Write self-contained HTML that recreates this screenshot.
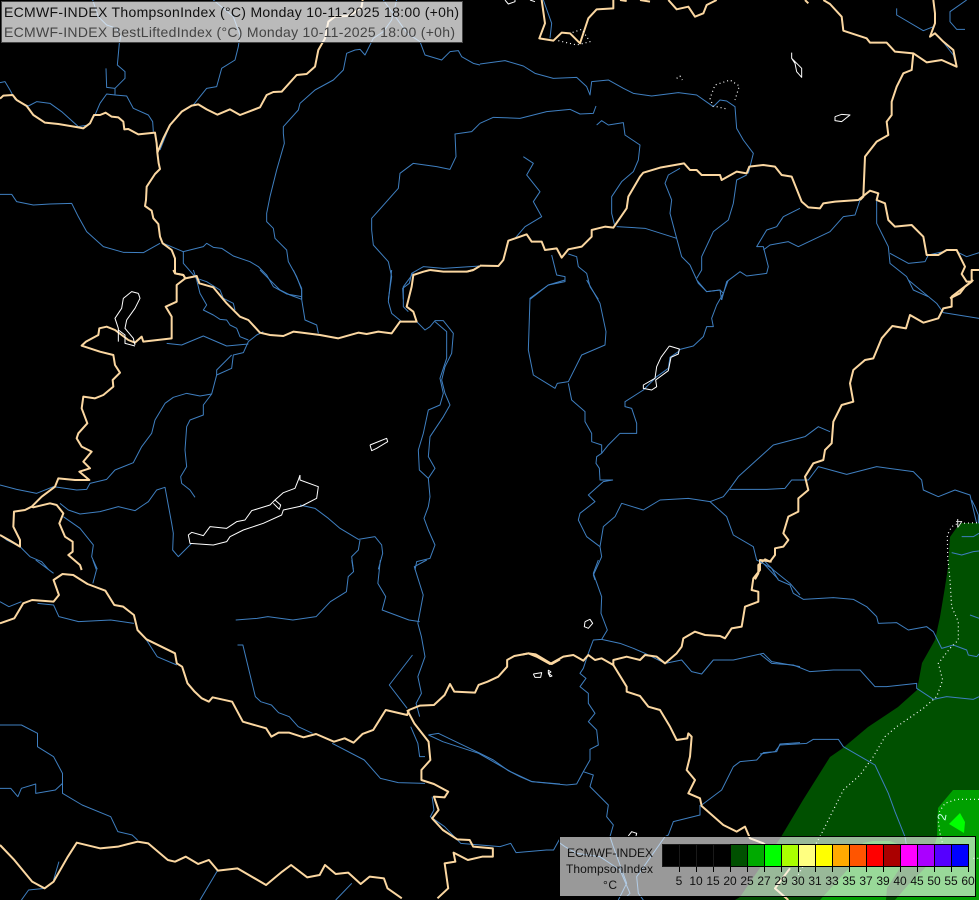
<!DOCTYPE html>
<html><head><meta charset="utf-8"><title>ECMWF-INDEX ThompsonIndex</title>
<style>
html,body{margin:0;padding:0;background:#000;width:979px;height:900px;overflow:hidden}
svg{display:block;position:absolute;left:0;top:0}
polyline{fill:none;vector-effect:non-scaling-stroke;stroke-linejoin:round}
.b polyline{stroke:#3f7fc0;stroke-width:1}
.t polyline{stroke:#fbd7a1;stroke-width:2}
.w polyline{stroke:#fff;stroke-width:1}
.d polyline{stroke:#fff;stroke-width:1.2;stroke-dasharray:1 3}
text{font-family:"Liberation Sans",sans-serif}
</style></head>
<body>
<svg width="979" height="900" viewBox="0 0 979 900" xmlns="http://www.w3.org/2000/svg">
<rect width="979" height="900" fill="#000"/>
<!-- fields -->
<polygon fill="#005000" points="979,523 960,523 950,537 948,567 945,587 940,617 935,640 922,663 917,690 898,707 868,727 843,748 830,757 803,800 781,837 740,897 735,900 979,900"/>
<polygon fill="#00a000" points="979,790 953,790 938,808 937,837 933,850 925,868 908,885 895,900 979,900"/>
<polygon fill="#00a000" points="863,843 873,841 890,841 900,845 900,868 887,888 886,900 820,900 840,878 850,867"/>
<polygon fill="#00ff00" points="960,813 965,822 964,833 949,824"/>

<!-- Z1 region -->
<g class="b" transform="translate(0 0) scale(.33333)">
<polyline points="0,248 15,245 30,270 45,298 60,307 85,318 110,305 150,310 185,335 235,380"/>
<polyline points="235,380 265,375 285,345 300,310 320,282 345,285 380,288 400,325 445,345 458,365 460,395"/>
<polyline points="480,450 500,400 510,375"/>
<polyline points="345,285 345,265 320,262 318,205"/>
<polyline points="345,265 375,235 375,215 352,195 358,130 362,110 350,85 320,75 295,50 278,0"/>
<polyline points="580,315 620,265 650,260 665,205 705,180 715,140 720,105 700,50 640,0"/>
<polyline points="905,898 905,870 890,830 865,785 860,750 825,715 820,685 800,665 800,640 810,590 830,510 853,430 850,400 850,380 895,330 900,310 945,270 1000,240 1030,210 1040,160 1065,150 1080,148 1095,165 1120,115 1150,95 1175,60 1190,0"/>
<polyline points="1150,0 1222,100 1260,125 1275,165 1325,180 1350,155 1375,152 1385,170 1420,190 1440,195"/>
<polyline points="0,583 35,583 50,605 100,615 150,612 215,610 235,650 260,695 310,740 370,757 430,758 480,730"/>
<polyline points="490,730 550,755 610,740 620,730 640,742 665,745 700,768 750,785 775,800 800,825 820,860 860,882 905,890"/>
<polyline points="550,755 550,790 585,830 600,845"/>
<polyline points="1440,370 1415,395 1365,402 1368,470 1350,508 1310,500 1240,490 1200,520 1195,565 1115,655 1115,690 1120,735 1165,785 1175,830 1165,898"/>
<polyline points="1210,898 1208,865 1228,850 1235,820 1270,800 1330,805 1440,798"/>
</g>
<g class="t" transform="translate(0 0) scale(.33333)">
<polyline points="0,296 10,287 38,285 50,300 80,318 100,345 135,368 175,372 235,382 250,385 270,370 282,345 300,345 317,338 335,350 355,352 370,365 373,388 385,387 415,403 465,398 470,430 472,458 476,490 480,507 465,522 440,560 438,600 435,618 455,632 460,655 475,672 480,710 488,730 515,750 525,775 525,820 550,825 556,835"/>
<polyline points="472,458 490,415 510,375 545,335 575,317 595,313 620,328 652,344 690,328 720,345 780,322 800,285 820,276 845,275 890,225 920,222 945,200 955,150 975,115 985,65 1005,50 1040,48 1060,40 1085,20 1088,0"/>
<polyline points="1400,815 1420,810 1440,798"/>
</g>

<!-- Z4 region -->
<g class="b" transform="translate(0 270) scale(.33333)">
<polyline points="0,645 50,658 110,670 160,650 230,660 260,658 270,640 320,628 345,600 400,578 425,530 455,490 465,450 495,400 520,382 560,370 600,378 635,372 650,315 695,295 700,255 730,248 745,215 770,195 790,185"/>
<polyline points="635,372 610,405 610,435 570,450 560,470 555,540 560,590 542,620 545,640 570,660 585,682"/>
<polyline points="650,315 650,300 695,255"/>
<polyline points="500,220 545,225 610,198 680,228 745,222"/>
<polyline points="745,210 720,200 710,175 690,165 680,150 660,148 640,135 610,120 620,105 600,70 590,30 580,0"/>
<polyline points="590,25 620,35 660,60 670,85 700,100 705,120"/>
<polyline points="780,0 815,35 840,60 870,75 905,88 915,150 950,165 955,190"/>
<polyline points="880,0 905,55 905,88"/>
<polyline points="1175,0 1165,95 1175,130 1205,155"/>
<polyline points="1240,10 1210,50 1210,110 1225,125"/>
<polyline points="1250,155 1275,180 1290,170 1305,152 1330,152 1360,190 1355,250 1335,290 1325,330 1335,370 1350,405 1330,440 1290,500 1285,560 1305,595 1285,625 1290,680 1285,710 1272,745 1285,780 1305,825 1290,865 1250,875 1245,900"/>
<polyline points="1305,155 1340,185 1340,265 1320,325 1330,370 1320,405 1285,420 1270,490 1255,540 1258,600 1285,625"/>
<polyline points="0,795 20,810 60,830 90,860 125,875 145,898"/>
<polyline points="190,740 240,775 280,825 275,860 292,898"/>
<polyline points="180,700 205,720 240,732 300,725 355,710 405,722 430,705 445,695 470,660 495,652 515,760 520,790 518,840 535,860 575,820"/>
<polyline points="900,705 945,715 985,745 1020,775 1075,808 1125,800 1145,825 1148,850 1135,898"/>
<polyline points="1080,810 1075,840 1055,860 1060,898"/>
</g>
<g class="t" transform="translate(0 270) scale(.33333)">
<polyline points="520,0 525,10 550,15 556,25 590,18 598,40 640,52 680,100 720,140 745,150 780,188 810,195 850,198 880,185 905,188 960,195 1015,205 1075,188 1100,192 1135,185 1175,190 1200,155 1250,155 1240,125 1220,110 1235,50 1240,15 1270,5 1290,0"/>
<polyline points="1290,0 1330,5 1400,5 1420,0"/>
<polyline points="556,25 530,45 530,95 497,110 515,140 515,205 430,215 425,200 405,218 385,210 345,180 320,170 298,175 295,195 258,215 245,227 300,245 340,255 345,285 360,308 338,330 340,350 310,375 285,385 250,380 245,415 262,460 235,490 230,505 245,530 275,545 250,575 270,595 238,605 268,630 225,630 175,625 165,650 125,680 95,710 75,720 42,725 40,770 60,810 60,830 30,812 0,795"/>
<polyline points="95,710 100,712 150,700 170,705 190,730 178,760 195,800 218,815 218,845 205,855 240,885 245,900"/>
</g>
<g class="w" transform="translate(0 270) scale(.33333)">
<polyline points="415,70 395,65 370,85 365,115 345,145 355,175 355,215"/>
<polyline points="355,180 375,195 375,220 405,228"/>
<polyline points="415,70 420,85 405,115 380,150 375,175 400,205 405,225"/>
<polyline points="900,615 900,630 955,650 950,685 905,708 850,720 845,735 790,760 730,780 690,800 680,815 640,825 570,820 565,795 575,787 610,797 630,770 680,775 710,755 735,750 755,722 810,705 825,690 850,668 885,655 895,630 900,615"/>
<polyline points="825,690 842,705 838,718 820,700"/>
<polyline points="1110,525 1160,505 1163,515 1130,535 1115,542 1110,525"/>
</g>

<!-- Z5 region: crop came through at 2.8x horizontally -->
<g class="b" transform="translate(0 560) scale(.35714 .33333)">
<polyline points="100,0 150,40"/>
<polyline points="260,0 270,30 260,70"/>
<polyline points="0,125 25,140 60,125"/>
<polyline points="105,130 150,135 165,170 220,185 310,180 375,190"/>
<polyline points="410,240 440,290 495,315"/>
<polyline points="985,0 990,35 975,50 970,95 925,125 885,170 820,180 750,170 720,175 660,180"/>
<polyline points="1065,0 1058,70 1080,110 1070,150 1145,180 1175,185"/>
<polyline points="1195,0 1160,20 1185,105 1170,190 1180,230 1190,290 1170,350 1180,400 1165,430 1175,470"/>
<polyline points="1155,285 1090,375 1140,445"/>
<polyline points="665,255 680,255 715,410 730,425 760,435 780,458 810,470 835,500 875,520"/>
<polyline points="930,550 1020,600 1065,655 1115,668 1190,670"/>
<polyline points="1200,525 1240,545 1340,580 1430,635 1490,665 1568,672"/>
<polyline points="1150,500 1170,550 1175,590 1190,590"/>
<polyline points="0,495 60,495 105,520 105,560 150,590 175,640 175,700 230,735 310,770 330,815 370,825 385,840"/>
<polyline points="0,685 30,685 50,710 60,685 100,672 100,700 155,690 175,670"/>
<polyline points="1210,710 1215,750 1205,770 1245,800 1290,850 1400,860 1430,850 1445,878 1530,870 1550,870 1568,835"/>
<polyline points="60,1020 80,990 125,985"/>
<polyline points="165,905 150,960"/>
<polyline points="560,1020 610,930"/>
<polyline points="940,1020 985,970"/>
</g>
<g class="t" transform="translate(0 560) scale(.35714 .33333)">
<polyline points="0,190 40,175 65,130 90,120 150,125 165,105 150,60 175,42 205,45 245,72 295,92 320,135 345,140 375,165 385,210 410,238 490,280 495,310 510,320 525,370 545,395 565,415 585,425 595,412 650,425 680,485 745,505 760,530 780,518 810,518 850,532 885,522 935,545 965,535 990,548 1015,522 1045,510 1080,450 1140,465 1145,450 1175,437 1215,435 1245,405 1260,372 1272,395 1330,398 1340,375 1365,365 1395,350 1420,320 1420,300 1440,288 1480,280 1500,283 1545,312 1568,298"/>
<polyline points="1140,450 1160,490 1200,545 1205,600 1180,630 1180,660 1215,672 1255,695 1245,712 1215,710 1228,750 1210,775 1240,810 1280,838 1315,840 1325,860 1380,865 1380,890 1350,890 1310,900 1270,878 1275,905 1245,910 1255,985 1225,1015"/>
<polyline points="0,855 40,900 90,965 125,985 150,965 190,890 215,848 280,865 330,860 385,845 415,850 470,900 490,905 520,890 555,912 585,900 610,932 665,925 745,975 790,935 815,915 860,952 895,945 910,915 940,942 975,938 1010,972 1035,950 1075,955 1085,985 1125,1015"/>
</g>

<!-- Z6 region -->
<g class="b" transform="translate(480 0) scale(.33333)">
<polyline points="0,192 75,182 130,198 165,220 220,235 290,232 320,260 330,285 335,245 385,240 430,265 460,280 515,288 595,278 650,285 700,320 720,300 740,303 765,320 770,385 790,420 820,460 805,520"/>
<polyline points="0,370 40,352 120,355 200,335 270,328 300,342 340,340 348,318"/>
<polyline points="350,375 365,362 385,375 430,368 435,405 480,435 475,480 460,515 425,545 395,590 395,640 405,680"/>
<polyline points="190,0 215,70 210,115"/>
<polyline points="130,470 160,490 140,525 180,575 160,605 185,650 135,680 105,715"/>
<polyline points="410,680 495,685 590,715"/>
<polyline points="590,715 570,640 575,600 555,550 565,525 600,505"/>
<polyline points="590,715 605,770 630,795 655,850 680,875 720,870 725,900"/>
<polyline points="800,525 770,540 760,610 745,660 700,695 665,770 665,810 650,835"/>
<polyline points="725,900 740,845 780,815 800,828 860,820 865,800 850,740 830,740 860,690 890,680 910,650 960,625"/>
<polyline points="850,750 870,735 925,725 955,740 1050,695 1090,650 1125,645 1140,600"/>
<polyline points="1190,600 1190,670 1225,740 1230,790 1280,830 1300,870 1345,890"/>
<polyline points="1230,760 1285,790 1335,785 1345,765 1390,755"/>
<polyline points="1430,755 1460,770 1497,758"/>
<polyline points="215,765 230,825 255,830 255,845 205,855 150,898"/>
<polyline points="265,762 290,770 295,800 320,820 330,860 355,898"/>
<polyline points="1250,25 1250,45 1330,92 1360,80"/>
<polyline points="1460,0 1410,35 1410,65 1430,88 1455,88"/>
<polyline points="1350,110 1360,80"/>
<polyline points="1385,120 1420,165 1430,200"/>
</g>
<g class="t" transform="translate(480 0) scale(.33333)">
<polyline points="185,0 195,70 178,115 220,122 245,98 270,100 300,130 325,55 350,28 400,25 400,0"/>
<polyline points="565,0 590,28 625,20 645,50 670,40 680,15 710,0"/>
<polyline points="420,0 440,3"/>
<polyline points="480,0 510,5"/>
<polyline points="975,0 985,10"/>
<polyline points="1030,0 1050,12 1085,50 1090,92 1160,115 1170,128 1220,128 1245,155 1300,160 1340,187 1385,180 1430,200 1420,150 1390,125 1365,100 1350,110 1365,70 1365,40 1360,0"/>
<polyline points="1300,160 1295,210 1270,220 1250,260 1235,305 1235,345 1220,365 1225,405 1190,425 1155,470 1150,590 1140,600"/>
<polyline points="0,797 55,798 70,780 85,722 120,710 140,703 155,725 185,725 195,750 230,745 245,773 265,748 305,740 335,710 335,690 355,685 375,680 400,683 440,625 445,590 480,530 490,518 540,503 612,490 630,510 650,510 665,525 720,525 725,540 770,515 800,520 808,500 850,495 885,500 905,525 935,530 965,605 985,622 1020,625 1030,610 1065,605 1135,600 1170,572 1195,580 1190,600 1215,610 1225,660 1245,680 1295,675 1330,710 1340,765 1375,765 1400,750 1430,750 1455,800 1445,822 1460,845 1475,845 1455,860 1440,880 1410,895"/>
<polyline points="1475,845 1475,810 1497,810"/>
</g>
<g class="w" transform="translate(480 0) scale(.33333)">
<polyline points="935,158 935,175 965,205 965,232 950,215 945,190 935,175"/>
<polyline points="1065,350 1065,362 1085,365 1110,345 1085,343 1065,350"/>
<polyline points="75,0 85,12 105,5 105,0"/>
<polyline points="150,0 165,5"/>
</g>
<g class="d" transform="translate(480 0) scale(.33333)">
<polyline points="235,122 290,135 330,125 305,88 270,100"/>
<polyline points="700,320 690,295 705,255 750,240 778,258 765,300"/>
<polyline points="710,320 745,328"/>
<polyline points="590,235 600,228 607,240"/>
</g>

<!-- Z7 region -->
<g class="b" transform="translate(480 280) scale(.33333)">
<polyline points="255,0 205,15 150,55 145,210 160,285 225,325 232,310 265,305 305,225 375,195 378,155 360,70 320,0"/>
<polyline points="265,310 275,360 315,395 315,425 335,460 335,485 365,495 365,520"/>
<polyline points="365,520 350,530 348,550 358,565 360,600 398,600 370,605 325,645 345,665 300,700 295,720 320,770 360,800 365,830 340,885 345,900"/>
<polyline points="365,520 385,495 420,460 470,460 470,430 455,385 435,380 435,365 490,330 530,290 565,265 570,232 595,215 600,208 640,198 670,170 680,140 700,140 695,115 710,75 730,40 745,0"/>
<polyline points="650,0 680,35 720,30 730,40"/>
<polyline points="360,800 370,740 405,710 425,670 490,690 540,660 625,655 690,665 730,650 750,625 775,590 830,540 880,495 975,470 1015,440 1050,455"/>
<polyline points="750,628 860,628 915,625 935,600 985,600 1015,560 1100,583 1190,560 1300,575 1325,600 1330,630 1375,650 1425,630 1470,645 1490,730"/>
<polyline points="690,665 740,710 760,765 820,800 830,840 850,850 895,898"/>
<polyline points="1285,0 1370,70 1390,98 1497,115"/>
</g>
<g class="t" transform="translate(480 280) scale(.33333)">
<polyline points="1480,0 1415,50 1415,80 1390,85 1375,115 1330,128 1290,105 1278,145 1237,138 1205,175 1180,235 1155,240 1120,270 1110,310 1120,365 1085,375 1060,425 1055,490 1035,510 1030,540 1000,550 975,590 985,630 955,655 955,695 925,710 910,760 925,780 910,800 885,805 885,825 870,845 855,838 835,855 835,880 825,898"/>
</g>
<g class="w" transform="translate(480 280) scale(.33333)">
<polyline points="568,198 598,207 595,222 573,232 565,272 527,300 530,320 515,330 490,325 490,315 525,295 530,260 543,232 568,198"/>
</g>

<!-- Z8 region -->
<g class="b" transform="translate(400 560) scale(.33333)">
<polyline points="595,0 580,40 605,110 603,160 622,210 605,238 580,240 565,280 550,325 540,340 558,355 540,380 565,400 565,430 585,460 565,485 590,510 595,555 570,568 570,600 550,635 530,672 500,675 395,665 360,650 325,632 280,600 240,580 115,520 85,525"/>
<polyline points="550,635 580,645 570,680 625,735 620,770 640,795 630,830"/>
<polyline points="605,238 660,250 700,265 735,280 795,310 845,300 875,335 905,342 940,300 1000,300 1090,280 1115,305 1200,320"/>
<polyline points="905,735 965,690 1000,620 1020,605 1070,600 1090,578 1130,575 1140,552 1200,548"/>
<polyline points="1090,0 1120,30 1170,70 1200,105"/>
<polyline points="900,735 900,765 820,785 805,825 795,830 710,950 715,1000 730,1020"/>
<polyline points="630,830 640,860 680,970 655,1020"/>
<polyline points="478,848 495,860 530,880 600,890 660,930 690,1000 680,1010"/>
</g>
<g class="t" transform="translate(400 560) scale(.33333)">
<polyline points="640,315 680,380 680,395 720,408 745,440 780,450 810,500 830,540 862,535 865,520 875,530 870,590 860,630 885,660 865,700 900,715 905,738 970,795 1010,815 1035,800 1050,835 1090,850 1100,858"/>
<polyline points="366,284 385,280 410,290 450,312 490,290 520,285 550,302 565,285 585,300 605,295 640,315 640,300 680,290 720,300 735,285 770,290 795,310 830,280 845,260 850,235 885,215 915,225 960,228 975,235 995,205 1025,200 1035,140 1075,125 1075,95 1055,90 1060,55 1080,30 1080,0 1115,5"/>
<polyline points="1170,925 1125,985 1165,1020"/>
</g>
<g class="w" transform="translate(400 560) scale(.33333)">
<polyline points="555,185 570,178 578,190 565,205 553,200 555,185"/>
<polyline points="400,342 425,338 422,352 405,352 400,342"/>
<polyline points="445,330 453,336 446,340 456,348 450,350 445,340 445,330"/>
<polyline points="685,828 695,815 710,820 708,828"/>
</g>

<!-- Z3 region -->
<g class="b" transform="translate(760 500) scale(.33333)">
<polyline points="635,0 645,20 655,45 655,70"/>
<polyline points="0,185 35,205 55,240 90,255 100,280 130,298 220,293 280,298 320,320 350,350 355,370 410,368 445,390 500,380 520,395 545,445 580,435 620,450 625,465 650,470 657,462"/>
<polyline points="605,110 640,110 657,100"/>
<polyline points="575,158 605,165 640,155 657,153"/>
<polyline points="630,345 657,355"/>
<polyline points="0,462 35,490 100,495 150,515 220,510 300,510 345,560 380,560 470,550 470,565 520,598 560,590 640,598 657,590"/>
<polyline points="0,762 45,755 60,735 140,730 160,718 235,718 250,740 345,795 385,880 405,935 435,1010 440,1040"/>
</g>
<g class="d" transform="translate(760 500) scale(.33333)">
<polyline points="600,70 655,68"/>
<polyline points="590,72 575,80 562,105 563,170 570,240 575,320 595,365 595,420 570,445 535,490 548,540 530,590 490,625 410,680 375,710 340,770 300,825 250,870 200,970 180,1010 100,1150"/>
<polyline points="657,898 590,898 555,910 538,935"/>
<polyline points="535,965 540,1000 550,1040"/>
<polyline points="640,1075 657,1075"/>
</g>
<text x="961" y="528" font-size="12" fill="#ddd" text-anchor="middle" transform="rotate(180 960 523.5)">4</text>
<text x="942" y="821" font-size="12" fill="#cfe" text-anchor="middle" transform="rotate(-80 942 817)">2</text>

<!-- title -->
<rect x="1.5" y="1.5" width="461" height="41" fill="#fff" fill-opacity=".73" stroke="#444" stroke-width="1"/>
<text x="4" y="17" font-size="14" fill="#111" textLength="455" lengthAdjust="spacing">ECMWF-INDEX ThompsonIndex (°C) Monday 10-11-2025 18:00 (+0h)</text>
<text x="4" y="37" font-size="14" fill="#444" textLength="451" lengthAdjust="spacing">ECMWF-INDEX BestLiftedIndex (°C) Monday 10-11-2025 18:00 (+0h)</text>

<!-- legend -->
<rect x="559.5" y="836.5" width="416" height="60" fill="#fff" fill-opacity=".6" stroke="#000" stroke-width="1"/>
<g font-size="12" fill="#111">
<text x="567" y="857" textLength="86" lengthAdjust="spacing">ECMWF-INDEX</text>
<text x="566" y="873" textLength="87" lengthAdjust="spacing">ThompsonIndex</text>
<text x="603" y="889" textLength="14" lengthAdjust="spacing">°C</text>
</g>
<g stroke="#000" stroke-width="1">
<rect x="662.5" y="844.5" width="17" height="22" fill="#000" stroke="#1a1a1a"/>
<rect x="679.5" y="844.5" width="17" height="22" fill="#000" stroke="#1a1a1a"/>
<rect x="696.5" y="844.5" width="17" height="22" fill="#000" stroke="#1a1a1a"/>
<rect x="713.5" y="844.5" width="17" height="22" fill="#000" stroke="#1a1a1a"/>
<rect x="730.5" y="844.5" width="17" height="22" fill="#005000"/>
<rect x="747.5" y="844.5" width="17" height="22" fill="#00aa00"/>
<rect x="764.5" y="844.5" width="17" height="22" fill="#00ff00"/>
<rect x="781.5" y="844.5" width="17" height="22" fill="#aaff00"/>
<rect x="798.5" y="844.5" width="17" height="22" fill="#ffff80"/>
<rect x="815.5" y="844.5" width="17" height="22" fill="#ffff00"/>
<rect x="832.5" y="844.5" width="17" height="22" fill="#ffaa00"/>
<rect x="849.5" y="844.5" width="17" height="22" fill="#ff5500"/>
<rect x="866.5" y="844.5" width="17" height="22" fill="#ff0000"/>
<rect x="883.5" y="844.5" width="17" height="22" fill="#aa0000"/>
<rect x="900.5" y="844.5" width="17" height="22" fill="#ff00ff"/>
<rect x="917.5" y="844.5" width="17" height="22" fill="#aa00ff"/>
<rect x="934.5" y="844.5" width="17" height="22" fill="#5500ff"/>
<rect x="951.5" y="844.5" width="17" height="22" fill="#0000ff"/>
<path fill="none" d="M679.5 867v5M696.5 867v5M713.5 867v5M730.5 867v5M747.5 867v5M764.5 867v5M781.5 867v5M798.5 867v5M815.5 867v5M832.5 867v5M849.5 867v5M866.5 867v5M883.5 867v5M900.5 867v5M917.5 867v5M934.5 867v5M951.5 867v5M968.5 867v5"/>
</g>
<g font-size="12" fill="#111" text-anchor="middle">
<text x="679" y="885">5</text><text x="696" y="885">10</text><text x="713" y="885">15</text><text x="730" y="885">20</text><text x="747" y="885">25</text><text x="764" y="885">27</text><text x="781" y="885">29</text><text x="798" y="885">30</text><text x="815" y="885">31</text><text x="832" y="885">33</text><text x="849" y="885">35</text><text x="866" y="885">37</text><text x="883" y="885">39</text><text x="900" y="885">40</text><text x="917" y="885">45</text><text x="934" y="885">50</text><text x="951" y="885">55</text><text x="968" y="885">60</text>
</g>
</svg>
</body></html>
